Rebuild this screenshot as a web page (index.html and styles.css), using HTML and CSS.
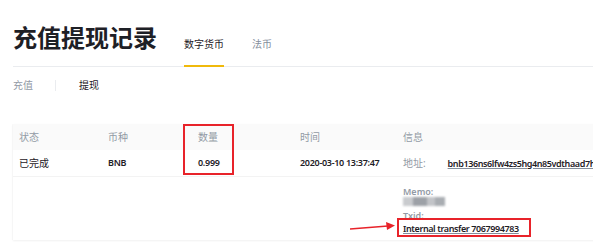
FILE: index.html
```html
<!DOCTYPE html>
<html lang="zh-CN">
<head>
  <meta charset="UTF-8" />
  <title>充值提现记录</title>
  <link rel="stylesheet" href="styles.css">
</head>
<body>
  <div class="page">
    <div class="header">
      <div class="title">充值提现记录</div>
      <div class="tab active">数字货币</div>
      <div class="tab">法币</div>
    </div>

    <div class="subtabs">
      <span class="sub">充值</span>
      <span class="divider"></span>
      <span class="sub active">提现</span>
    </div>

    <div class="table">
      <div class="row head">
        <div>状态</div>
        <div>币种</div>
        <div>数量</div>
        <div>时间</div>
        <div>信息</div>
      </div>
      <div class="row main">
        <div>已完成</div>
        <div class="strong">BNB</div>
        <div class="strong">0.999</div>
        <div class="strong">2020-03-10 13:37:47</div>
        <div class="info">
          <span class="label">地址:</span>
          <a class="link">bnb136ns6lfw4zs5hg4n85vdthaad7hq5m4gtkgf23</a>
        </div>
      </div>
      <div class="row detail">
        <div></div>
        <div></div>
        <div></div>
        <div></div>
        <div class="extra">
          <div class="label latin">Memo:</div>
          <div class="blur"><span></span><span></span><span></span><span></span></div>
          <div class="label latin txid">Txid:</div>
          <a class="link">Internal transfer 7067994783</a>
        </div>
      </div>
    </div>

    <!-- annotations -->
    <div class="mark mark-amount"></div>
    <div class="mark mark-txid"></div>
    <svg class="arrow" width="60" height="12" viewBox="0 0 60 12">
      <line x1="2" y1="8" x2="40" y2="5" stroke="#e8232a" stroke-width="1.5"/>
      <polygon points="38,1 47,4.5 39,9" fill="#e8232a"/>
    </svg>
  </div>
</body>
</html>
```

FILE: styles.css
```css
body {
  margin: 0;
  background: #fff;
  overflow: hidden;
  font-family: "Noto Sans", "Noto Sans CJK SC", sans-serif;
  color: #1e2026;
}

.page {
  position: relative;
  width: 593px;
  height: 242px;
  overflow: hidden;
}

.header {
  display: flex;
  align-items: flex-end;
  height: 67px;
  margin-left: 13px;
  border-bottom: 1px solid #eaecef;
  box-sizing: border-box;
}

.title {
  font-size: 24px;
  line-height: 24px;
  font-weight: bold;
  margin-bottom: 16px;
  width: 143px;
  white-space: nowrap;
}

.tab {
  font-size: 10px;
  line-height: 14px;
  color: #848e9c;
  padding-bottom: 14px;
  border-bottom: 2px solid transparent;
  margin-bottom: -1px;
  margin-left: 28px;
}

.tab.active {
  color: #1e2026;
  border-bottom-color: #f0b90b;
}

.subtabs {
  display: flex;
  align-items: center;
  margin: 11px 0 0 13px;
  font-size: 10px;
  line-height: 14px;
}

.sub {
  color: #929aa5;
}

.sub.active {
  color: #1e2026;
}

.divider {
  width: 1px;
  height: 11px;
  background: #eaecef;
  margin: 0 23px 0 22px;
}

.table {
  width: 640px;
  margin: 32px 0 0 13px;
  box-shadow: 0 1px 2px rgba(0, 0, 0, 0.06), -1px 0 1px rgba(0, 0, 0, 0.02);
}

.row {
  display: grid;
  grid-template-columns: 89px 90px 102px 103px 1fr;
  font-size: 10px;
  line-height: 14px;
}

.row > div {
  padding-left: 6px;
  white-space: nowrap;
}

.head {
  background: #fafafa;
  color: #929aa5;
  height: 26px;
  align-items: center;
}

.main {
  height: 27px;
  align-items: center;
  border-bottom: 1px solid #f3f3f3;
  box-sizing: border-box;
}

.strong {
  font-weight: 600;
  font-size: 9px;
  letter-spacing: -0.3px;
}

.label {
  color: #929aa5;
}

.info .label {
  display: inline-block;
  width: 42px;
}

.link {
  color: #1e2026;
  font-weight: 600;
  font-size: 9px;
  letter-spacing: -0.4px;
  text-decoration: underline;
  text-decoration-color: #848e9c;
}

.detail {
  height: 63px;
}

.extra {
  padding-top: 9px;
  line-height: 11px;
}

.latin {
  font-size: 9px;
  font-weight: 600;
}

.blur {
  display: flex;
  height: 9px;
  margin: 0 0 4px;
  filter: blur(1.2px);
}

.blur span {
  background: #b5b8bd;
  height: 9px;
}

.blur span:nth-child(1) { width: 10px; background: #c9cbce; }
.blur span:nth-child(2) { width: 14px; background: #9da1a7; }
.blur span:nth-child(3) { width: 8px; background: #c2c4c8; }
.blur span:nth-child(4) { width: 10px; background: #a9adb2; }

.txid {
  margin-bottom: 2px;
}

.mark {
  position: absolute;
  border: 2px solid #e8232a;
  box-sizing: border-box;
}

.mark-amount {
  left: 183px;
  top: 124px;
  width: 51px;
  height: 51px;
}

.mark-txid {
  left: 397px;
  top: 218px;
  width: 134px;
  height: 19px;
}

.arrow {
  position: absolute;
  left: 348px;
  top: 221px;
}
```
